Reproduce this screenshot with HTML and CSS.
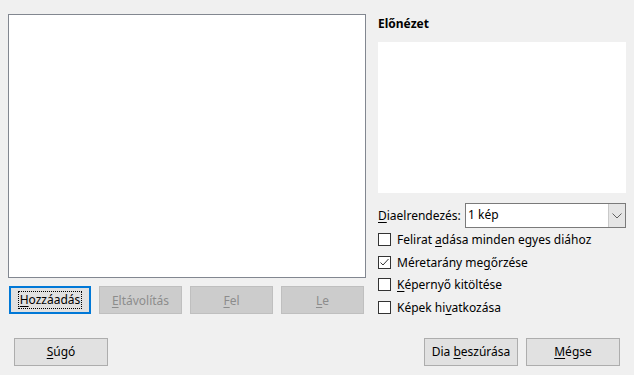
FILE: index.html
```html
<!DOCTYPE html>
<html lang="hu">
<head>
<meta charset="UTF-8" />
<title>Fotóalbum</title>
<link rel="stylesheet" href="styles.css">
</head>
<body>
<div class="dialog">
  <div class="main">
    <div class="left">
      <div class="listbox"></div>
      <div class="btn-row">
        <button class="btn focus"><span class="focus-ring"><u>H</u>ozzáadás</span></button>
        <button class="btn" disabled><span><u>E</u>ltávolítás</span></button>
        <button class="btn" disabled><span><u>F</u>el</span></button>
        <button class="btn" disabled><span><u>L</u>e</span></button>
      </div>
    </div>
    <div class="right">
      <div class="preview-title">Előnézet</div>
      <div class="preview"></div>
      <div class="layout-row">
        <label class="layout-label"><u>D</u>iaelrendezés:</label>
        <div class="combo">
          <span class="combo-text">1 kép</span>
          <span class="combo-btn">
            <svg width="10" height="6" viewBox="0 0 10 6"><path d="M0.5 0.5 L5 5 L9.5 0.5" fill="none" stroke="#606060" stroke-width="1"/></svg>
          </span>
        </div>
      </div>
      <div class="check"><span class="box"></span><span>Felirat <u>a</u>dása minden egyes diához</span></div>
      <div class="check"><span class="box"><svg width="11" height="11" viewBox="0 0 11 11"><path d="M1.5 5.5 L4 8 L9.5 2" fill="none" stroke="#333" stroke-width="1"/></svg></span><span>Méretarány me<u>g</u>őrzése</span></div>
      <div class="check"><span class="box"></span><span><u>K</u>épernyő kitöltése</span></div>
      <div class="check"><span class="box"></span><span>Képek hi<u>v</u>atkozása</span></div>
    </div>
  </div>
  <div class="footer">
    <button class="btn wide"><span><u>S</u>úgó</span></button>
    <div class="footer-right">
      <button class="btn wide"><span>Dia <u>b</u>eszúrása</span></button>
      <button class="btn wide"><span><u>M</u>égse</span></button>
    </div>
  </div>
</div>
</body>
</html>
```

FILE: styles.css
```css
html, body { margin: 0; padding: 0; background: #f0f0f0; }
body { font-family: "Noto Sans", "Open Sans", sans-serif; font-size: 12px; color: #000; width: 634px; height: 375px; overflow: hidden; }
u { text-decoration: underline; text-underline-offset: 2px; }

.dialog { padding: 14px 0 0 8px; }
.main { display: flex; gap: 12px; }
.left { width: 358px; }
.listbox { height: 262px; background: #fff; border: 1px solid #828790; }
.btn-row { display: flex; gap: 8px; margin-top: 8px; padding-left: 1px; }

.btn { font-family: inherit; font-size: 12px; color: #000; background: #e1e1e1; border: 1px solid #adadad; height: 28px; width: 83px; padding: 0; margin: 0; display: flex; align-items: center; justify-content: center; }
.btn:disabled { background: #cccccc; border-color: #bfbfbf; color: #8c8c8c; }
.btn.focus { border: 2px solid #0078d7; width: 82px; }
.focus-ring { border: 1px dotted #000; padding: 0 1px; line-height: 16px; }
.btn.wide { width: 94px; }

.right { width: 248px; }
.preview-title { font-weight: bold; height: 28px; line-height: 20px; }
.preview { height: 151px; background: #fff; }
.layout-row { display: flex; align-items: center; margin-top: 10px; height: 25px; }
.layout-label { width: 87px; }
.combo { flex: 1; height: 23px; display: flex; border: 1px solid #7a7a7a; background: #fff; }
.combo-text { flex: 1; padding-left: 2px; line-height: 22px; }
.combo-btn { width: 16px; background: #e5e5e5; border-left: 1px solid #c9c9c9; display: flex; align-items: center; justify-content: center; }

.check { display: flex; align-items: center; height: 22.7px; }
.check:first-of-type { margin-top: 1px; }
.box { width: 11px; height: 11px; border: 1px solid #333; background: #fff; margin-right: 6px; display: flex; align-items: center; justify-content: center; }

.footer { display: flex; justify-content: space-between; margin-top: 19px; padding-left: 6px; padding-right: 14px; }
.footer-right { display: flex; gap: 8px; }
```
